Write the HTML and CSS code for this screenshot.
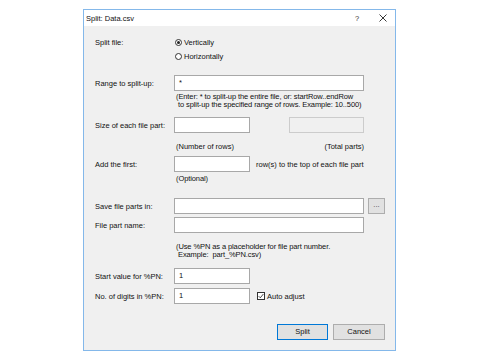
FILE: index.html
```html
<!DOCTYPE html>
<html>
<head>
<meta charset="utf-8">
<title>Split: Data.csv</title>
<link rel="stylesheet" href="styles.css">
</head>
<body>
<div class="dialog">
  <div class="titlebar">
    <span class="title">Split: Data.csv</span>
    <span class="tb-help">?</span>
    <span class="tb-close"><svg width="8" height="8" viewBox="0 0 8 8"><path d="M0.5 0.5L7.5 7.5M7.5 0.5L0.5 7.5" stroke="#222" stroke-width="0.9" fill="none"/></svg></span>
  </div>
  <div class="content">
    <div class="row radio-row">
      <div class="label">Split file:</div>
      <div class="radio"><span class="dot checked"></span>Vertically</div>
    </div>
    <div class="row radio-row">
      <div class="label"></div>
      <div class="radio"><span class="dot"></span>Horizontally</div>
    </div>

    <div class="row sec-range">
      <div class="label">Range to split-up:</div>
      <div class="field wide">*</div>
    </div>
    <div class="help help-range">
      <div>(Enter: * to split-up the entire file, or: startRow..endRow</div>
      <div>&nbsp;to split-up the specified range of rows. Example: 10..500)</div>
    </div>

    <div class="row sec-size">
      <div class="label">Size of each file part:</div>
      <div class="field small"></div>
      <div class="field total"></div>
    </div>
    <div class="hint-pair">
      <span>(Number of rows)</span>
      <span>(Total parts)</span>
    </div>

    <div class="row sec-add">
      <div class="label">Add the first:</div>
      <div class="field small"></div>
      <span class="after">row(s) to the top of each file part</span>
    </div>
    <div class="help help-opt">(Optional)</div>

    <div class="row sec-save">
      <div class="label">Save file parts in:</div>
      <div class="field wide"></div>
      <div class="browse">...</div>
    </div>
    <div class="row sec-name">
      <div class="label">File part name:</div>
      <div class="field wide"></div>
    </div>
    <div class="help help-name">
      <div>(Use %PN as a placeholder for file part number.</div>
      <div>&nbsp;Example:&nbsp; part_%PN.csv)</div>
    </div>

    <div class="row sec-start">
      <div class="label">Start value for %PN:</div>
      <div class="field small">1</div>
    </div>
    <div class="row sec-digits">
      <div class="label">No. of digits in %PN:</div>
      <div class="field small">1</div>
      <div class="check"><span class="box"><svg width="6" height="6" viewBox="0 0 6 6"><path d="M0.6 3.1L2.3 4.8L5.4 1.0" stroke="#222" stroke-width="0.8" fill="none"/></svg></span>Auto adjust</div>
    </div>

    <div class="buttons">
      <div class="btn primary">Split</div>
      <div class="btn">Cancel</div>
    </div>
  </div>
</div>
</body>
</html>
```
FILE: styles.css
```css
* { box-sizing: border-box; }

body {
  margin: 0;
  background: #ffffff;
  font-family: "Liberation Sans", Arial, sans-serif;
  font-size: 7.5px;
  color: #111;
}

.dialog {
  margin: 9px 0 0 83px;
  width: 313px;
  border: 1px solid #84b8ea;
  background: #f0f0f0;
}

.titlebar {
  height: 16px;
  background: #ffffff;
  display: flex;
  align-items: center;
  padding-left: 2px;
  padding-right: 4px;
}
.title { flex: 1; }
.tb-help {
  width: 10px;
  text-align: center;
  margin-right: 13px;
  color: #333;
}
.tb-close {
  width: 16px;
  height: 16px;
  display: flex;
  align-items: center;
  justify-content: center;
}

.content {
  padding: 9px 10px 10px 11px;
}

.row {
  display: flex;
  align-items: center;
}
.label {
  width: 79px;
  flex: none;
}

.radio-row { height: 14px; }
.radio {
  display: flex;
  align-items: center;
  margin-left: 1px;
}
.dot {
  width: 7px;
  height: 7px;
  border: 1px solid #333;
  border-radius: 50%;
  background: #fff;
  margin-right: 2px;
  display: flex;
  align-items: center;
  justify-content: center;
}
.dot.checked::after {
  content: "";
  width: 3px;
  height: 3px;
  border-radius: 50%;
  background: #222;
}

.field {
  height: 16px;
  border: 1px solid #a8a8a8;
  background: #fff;
  padding-left: 4px;
  line-height: 14px;
  flex: none;
}
.wide { width: 190px; }
.small { width: 76px; }
.total {
  width: 75px;
  margin-left: 39px;
  background: #f0f0f0;
  border-color: #cccccc;
}

.help {
  margin-left: 81px;
  line-height: 8px;
  letter-spacing: -0.1px;
}

.sec-range { margin-top: 12px; }
.help-range { margin-top: 2px; }
.sec-size { margin-top: 8px; }
.hint-pair {
  margin-top: 10px;
  margin-left: 81px;
  width: 188px;
  line-height: 8px;
  display: flex;
  justify-content: space-between;
}
.sec-add { margin-top: 5px; }
.after { margin-left: 6px; }
.help-opt { margin-top: 3px; }
.sec-save { margin-top: 15px; }
.browse {
  margin-left: 4px;
  width: 17px;
  height: 16px;
  border: 1px solid #adadad;
  background: #e1e1e1;
  text-align: center;
  line-height: 11px;
  color: #444;
}
.sec-name { margin-top: 3px; }
.help-name { margin-top: 10px; }
.sec-start { margin-top: 9px; }
.sec-digits { margin-top: 4px; }

.check {
  display: flex;
  align-items: center;
  margin-left: 7px;
}
.box {
  width: 8px;
  height: 8px;
  border: 1px solid #333;
  background: #fff;
  margin-right: 2px;
  display: flex;
  align-items: center;
  justify-content: center;
}

.buttons {
  margin-top: 20px;
  display: flex;
  justify-content: flex-end;
  gap: 5px;
}
.btn {
  width: 52px;
  height: 16px;
  border: 1px solid #adadad;
  background: #e1e1e1;
  text-align: center;
  line-height: 14px;
}
.btn.primary {
  width: 51px;
  border-color: #0078d7;
}
```
